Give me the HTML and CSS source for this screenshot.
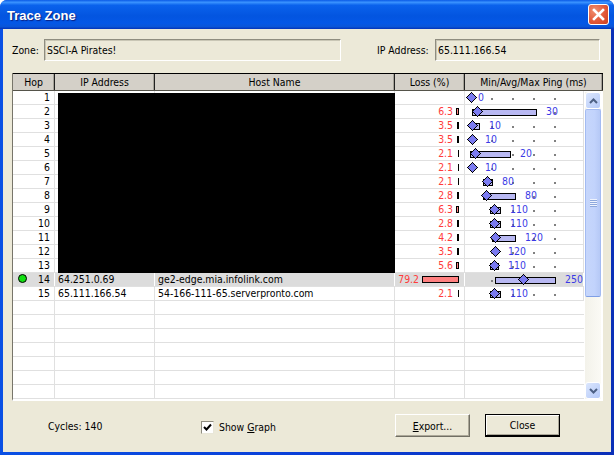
FILE: index.html
```html
<!DOCTYPE html>
<html lang="en">
<head>
  <meta charset="UTF-8" />
  <title>Trace Zone</title>
  <link rel="stylesheet" href="styles.css">
</head>
<body>
  <svg class="defs" width="0" height="0">
    <symbol id="diamond" viewBox="0 0 11 11">
      <polygon points="5.5,0 11,5.5 5.5,11 0,5.5" fill="#000" shape-rendering="crispEdges" />
      <polygon points="5.5,1.4 9.6,5.5 5.5,9.6 1.4,5.5" fill="#7b7bf0" shape-rendering="crispEdges" />
    </symbol>
  </svg>

  <div class="window">
    <div class="titlebar">
      <span class="title">Trace Zone</span>
      <button class="close-btn">
        <svg width="13" height="13" viewBox="0 0 13 13">
          <path d="M2 2 L11 11 M11 2 L2 11" stroke="#fff" stroke-width="2.6" stroke-linecap="square" />
        </svg>
      </button>
    </div>

    <div class="client">
      <div class="fields">
        <label class="zone-label">Zone:</label>
        <div class="field zone-field">SSCI-A Pirates!</div>
        <label class="ip-label">IP Address:</label>
        <div class="field ip-field">65.111.166.54</div>
      </div>

      <div class="list">
        <div class="list-head">
          <div>Hop</div>
          <div>IP Address</div>
          <div>Host Name</div>
          <div>Loss (%)</div>
          <div>Min/Avg/Max Ping (ms)</div>
        </div>
        <div class="list-body">
          <div class="rows">
            <div class="redacted"></div>

            <div class="row">
              <div class="hop">1</div><div></div><div></div><div class="loss"></div>
              <div class="graph">
                <svg class="dm" style="left:1px"><use href="#diamond" /></svg>
                <span class="ms" style="left:13px">0</span>
              </div>
            </div>
            <div class="row">
              <div class="hop">2</div><div></div><div></div>
              <div class="loss"><span>6.3</span><span class="meter"><i class="pink" style="width:3px"></i></span></div>
              <div class="graph">
                <b class="span" style="left:7px;width:65px"></b>
                <svg class="dm" style="left:7px"><use href="#diamond" /></svg>
                <span class="ms" style="left:81px">30</span>
              </div>
            </div>
            <div class="row">
              <div class="hop">3</div><div></div><div></div>
              <div class="loss"><span>3.5</span><span class="meter"><i style="width:2px"></i></span></div>
              <div class="graph">
                <b class="span" style="left:8px;width:7px"></b>
                <svg class="dm" style="left:2px"><use href="#diamond" /></svg>
                <span class="ms" style="left:24px">10</span>
              </div>
            </div>
            <div class="row">
              <div class="hop">4</div><div></div><div></div>
              <div class="loss"><span>3.5</span><span class="meter"><i style="width:2px"></i></span></div>
              <div class="graph">
                <svg class="dm" style="left:2px"><use href="#diamond" /></svg>
                <span class="ms" style="left:20px">10</span>
              </div>
            </div>
            <div class="row">
              <div class="hop">5</div><div></div><div></div>
              <div class="loss"><span>2.1</span><span class="meter"><i style="width:1px"></i></span></div>
              <div class="graph">
                <b class="span" style="left:5px;width:41px"></b>
                <svg class="dm" style="left:5px"><use href="#diamond" /></svg>
                <span class="ms" style="left:55px">20</span>
              </div>
            </div>
            <div class="row">
              <div class="hop">6</div><div></div><div></div>
              <div class="loss"><span>2.1</span><span class="meter"><i style="width:1px"></i></span></div>
              <div class="graph">
                <svg class="dm" style="left:2px"><use href="#diamond" /></svg>
                <span class="ms" style="left:20px">10</span>
              </div>
            </div>
            <div class="row">
              <div class="hop">7</div><div></div><div></div>
              <div class="loss"><span>2.1</span><span class="meter"><i style="width:1px"></i></span></div>
              <div class="graph">
                <b class="span" style="left:18px;width:10px"></b>
                <svg class="dm" style="left:17px"><use href="#diamond" /></svg>
                <span class="ms" style="left:37px">80</span>
              </div>
            </div>
            <div class="row">
              <div class="hop">8</div><div></div><div></div>
              <div class="loss"><span>2.8</span><span class="meter"><i style="width:2px"></i></span></div>
              <div class="graph">
                <b class="span" style="left:18px;width:33px"></b>
                <svg class="dm" style="left:16px"><use href="#diamond" /></svg>
                <span class="ms" style="left:60px">80</span>
              </div>
            </div>
            <div class="row">
              <div class="hop">9</div><div></div><div></div>
              <div class="loss"><span>6.3</span><span class="meter"><i class="pink" style="width:3px"></i></span></div>
              <div class="graph">
                <b class="span" style="left:25px;width:11px"></b>
                <svg class="dm" style="left:24px"><use href="#diamond" /></svg>
                <span class="ms" style="left:45px">110</span>
              </div>
            </div>
            <div class="row">
              <div class="hop">10</div><div></div><div></div>
              <div class="loss"><span>2.8</span><span class="meter"><i style="width:2px"></i></span></div>
              <div class="graph">
                <b class="span" style="left:25px;width:11px"></b>
                <svg class="dm" style="left:24px"><use href="#diamond" /></svg>
                <span class="ms" style="left:45px">110</span>
              </div>
            </div>
            <div class="row">
              <div class="hop">11</div><div></div><div></div>
              <div class="loss"><span>4.2</span><span class="meter"><i style="width:2px"></i></span></div>
              <div class="graph">
                <b class="span" style="left:27px;width:24px"></b>
                <svg class="dm" style="left:25px"><use href="#diamond" /></svg>
                <span class="ms" style="left:60px">120</span>
              </div>
            </div>
            <div class="row">
              <div class="hop">12</div><div></div><div></div>
              <div class="loss"><span>3.5</span><span class="meter"><i style="width:2px"></i></span></div>
              <div class="graph">
                <svg class="dm" style="left:25px"><use href="#diamond" /></svg>
                <span class="ms" style="left:43px">120</span>
              </div>
            </div>
            <div class="row">
              <div class="hop">13</div><div></div><div></div>
              <div class="loss"><span>5.6</span><span class="meter"><i class="pink" style="width:3px"></i></span></div>
              <div class="graph">
                <b class="span" style="left:25px;width:9px"></b>
                <svg class="dm" style="left:24px"><use href="#diamond" /></svg>
                <span class="ms" style="left:43px">110</span>
              </div>
            </div>
            <div class="row current">
              <div class="hop"><em class="led"></em>14</div>
              <div class="ip">64.251.0.69</div>
              <div class="host">ge2-edge.mia.infolink.com</div>
              <div class="loss"><span>79.2</span><span class="meter"><i class="pink" style="width:37px"></i></span></div>
              <div class="graph">
                <b class="span" style="left:30px;width:61px"></b>
                <svg class="dm" style="left:53px"><use href="#diamond" /></svg>
                <span class="ms" style="left:100px">250</span>
              </div>
            </div>
            <div class="row">
              <div class="hop">15</div>
              <div class="ip">65.111.166.54</div>
              <div class="host">54-166-111-65.serverpronto.com</div>
              <div class="loss"><span>2.1</span><span class="meter"><i style="width:1px"></i></span></div>
              <div class="graph">
                <b class="span" style="left:25px;width:11px"></b>
                <svg class="dm" style="left:24px"><use href="#diamond" /></svg>
                <span class="ms" style="left:45px">110</span>
              </div>
            </div>

            <div class="row blank"><div></div><div></div><div></div><div></div></div>
            <div class="row blank"><div></div><div></div><div></div><div></div></div>
            <div class="row blank"><div></div><div></div><div></div><div></div></div>
            <div class="row blank"><div></div><div></div><div></div><div></div></div>
            <div class="row blank"><div></div><div></div><div></div><div></div></div>
            <div class="row blank"><div></div><div></div><div></div><div></div></div>
            <div class="row blank"><div></div><div></div><div></div><div></div></div>
          </div>

          <div class="scrollbar">
            <div class="sb-btn">
              <svg width="9" height="6" viewBox="0 0 9 6"><path d="M1 5 L4.5 1.5 L8 5" fill="none" stroke="#4d6185" stroke-width="2" /></svg>
            </div>
            <div class="sb-thumb">
              <div class="grip"></div>
            </div>
            <div class="sb-track"></div>
            <div class="sb-btn">
              <svg width="9" height="6" viewBox="0 0 9 6"><path d="M1 1 L4.5 4.5 L8 1" fill="none" stroke="#4d6185" stroke-width="2" /></svg>
            </div>
          </div>
        </div>
      </div>

      <div class="footer">
        <span class="cycles">Cycles: 140</span>
        <label class="check">
          <span class="check-box">
            <svg width="11" height="11" viewBox="0 0 11 11"><path d="M2 5 L4.5 7.5 L9 2.5" fill="none" stroke="#000" stroke-width="2" /></svg>
          </span>
          <span>Show <u>G</u>raph</span>
        </label>
        <button class="btn export-btn"><u>E</u>xport...</button>
        <button class="btn close">Close</button>
      </div>
    </div>
  </div>
</body>
</html>
```

FILE: styles.css
```css
* {
  box-sizing: border-box;
}

html, body {
  margin: 0;
  padding: 0;
  overflow: hidden;
}

body {
  width: 614px;
  height: 455px;
  font-family: "DejaVu Sans Condensed", "Liberation Sans", sans-serif;
  font-size: 10.4px;
  color: #000;
  background: #fff;
}

.defs {
  position: absolute;
}

.window {
  width: 614px;
  height: 455px;
  display: flex;
  flex-direction: column;
  background: linear-gradient(90deg, #0a50e4 0, #0a3fd8 50%, #0a2fb8 100%);
  border-radius: 7px 7px 0 0;
  overflow: hidden;
}

.titlebar {
  height: 29px;
  flex: none;
  display: flex;
  align-items: center;
  justify-content: space-between;
  padding: 1px 5px 0 7px;
  background: linear-gradient(180deg, #0a5ae6 0%, #3a93ff 8%, #0a62ec 18%, #0355e0 55%, #0457e6 80%, #0a55d8 92%, #0332b8 100%);
}

.title {
  color: #fff;
  font-family: "Liberation Sans", sans-serif;
  font-weight: bold;
  font-size: 13px;
  text-shadow: 1px 1px 1px #0a1f80;
}

.close-btn {
  width: 21px;
  height: 21px;
  padding: 0;
  margin-top: -1px;
  border: 1px solid #fff;
  border-radius: 3px;
  background: radial-gradient(circle at 30% 30%, #f09070, #e2593a 55%, #cc3f1e);
  display: flex;
  align-items: center;
  justify-content: center;
}

.client {
  flex: 1;
  margin: 0 3px 3px;
  padding: 10px 8px 0 9px;
  background: #ece9d8;
  display: flex;
  flex-direction: column;
}

.fields {
  display: flex;
  align-items: center;
  height: 22px;
  flex: none;
}

.zone-label {
  width: 32px;
}

.ip-label {
  width: 58px;
  margin-left: 36px;
}

.field {
  height: 22px;
  line-height: 20px;
  padding-left: 2px;
  border: 1px solid;
  border-color: #8f8d80 #fff #fff #8f8d80;
  box-shadow: inset 1px 1px 0 #c9c6b5;
}

.zone-field {
  width: 297px;
}

.ip-field {
  width: 165px;
}

.list {
  margin-top: 12px;
  height: 328px;
  flex: none;
  background: #fff;
  border-left: 1px solid #77756a;
  border-bottom: 2px solid #fff;
  display: flex;
  flex-direction: column;
  overflow: hidden;
}

.list-head {
  height: 18px;
  flex: none;
  display: grid;
  grid-template-columns: 42px 100px 240px 70px 138px;
  background: #d4d0c8;
  border-top: 1px solid #000;
  border-bottom: 1px solid #55534a;
}

.list-head div {
  text-align: center;
  line-height: 16px;
  border-right: 1px solid #222;
  box-shadow: inset -1px 0 0 #a5a298;
}

.list-body {
  display: flex;
  flex: 1;
  min-height: 0;
}

.rows {
  width: 571px;
  position: relative;
  flex: none;
}

/* black box hiding the first hops */
.redacted {
  position: absolute;
  left: 45px;
  top: 2px;
  width: 337px;
  height: 180px;
  background: #000;
  z-index: 2;
}

.row {
  height: 14px;
  display: grid;
  grid-template-columns: 42px 100px 240px 70px 119px;
  border-bottom: 1px solid #e0e0e0;
  line-height: 13px;
  white-space: nowrap;
}

.row > div {
  border-right: 1px solid #e0e0e0;
  height: 13px;
}

.row.current {
  background: #dcdcdc;
}

.row.current > div {
  border-right-color: #fff;
}

.hop {
  text-align: right;
  padding-right: 4px;
  position: relative;
}

.ip, .host {
  padding-left: 3px;
}

.led {
  position: absolute;
  left: 5px;
  top: 1px;
  width: 9px;
  height: 9px;
  border: 1px solid #000;
  border-radius: 50%;
  background: #12e012;
}

.loss {
  display: flex;
  justify-content: flex-end;
  align-items: center;
  padding-right: 5px;
  color: #ff3b3b;
}

.meter {
  min-width: 3px;
  margin-left: 3px;
  display: flex;
  justify-content: flex-end;
}

.meter i {
  display: block;
  height: 7px;
  background: #000;
  box-shadow: inset 0 0 0 1px #000;
}

.meter i.pink {
  background: #ff8080;
}

/* the four grey ticks behind every ping graph */
.graph {
  position: relative;
  background-image:
    linear-gradient(#808080, #808080),
    linear-gradient(#808080, #808080),
    linear-gradient(#808080, #808080),
    linear-gradient(#808080, #808080);
  background-size: 2px 2px;
  background-repeat: no-repeat;
  background-position: 26px 7px, 47px 7px, 68px 7px, 89px 7px;
}

.span {
  position: absolute;
  top: 4px;
  height: 7px;
  background: #b8b8f2;
  border: 1px solid #000;
}

.dm {
  position: absolute;
  top: 1px;
  width: 11px;
  height: 11px;
}

.ms {
  position: absolute;
  top: 0;
  color: #3a3ae6;
}

.scrollbar {
  width: 19px;
  flex: none;
  margin-top: 1px;
  padding: 0 2px 0 1px;
  display: flex;
  flex-direction: column;
  background: linear-gradient(90deg, #fff 0, #fff 1px, #f3f2ea 1px, #fbfaf5 17px, #fff 17px);
  height: 307px;
}

.sb-btn {
  height: 17px;
  flex: none;
  display: flex;
  align-items: center;
  justify-content: center;
  border: 1px solid #fff;
  border-radius: 3px;
  background: linear-gradient(135deg, #dbe6fd, #b4c9f8);
}

.sb-thumb {
  height: 188px;
  flex: none;
  display: flex;
  align-items: center;
  justify-content: center;
  border: 1px solid #a3bbf2;
  border-bottom-color: #7f9fe6;
  border-radius: 2px;
  background: linear-gradient(90deg, #c6d6fb, #c2d3fc 60%, #b6c9f6);
}

.grip {
  width: 7px;
  height: 8px;
  background: repeating-linear-gradient(180deg, #eef3fe 0, #eef3fe 1px, #8ea8dc 1px, #8ea8dc 2px);
}

.sb-track {
  flex: 1;
}

.footer {
  flex: 1;
  display: flex;
  align-items: center;
  padding: 0 0 2px 36px;
}

.cycles {
  width: 153px;
}

.check {
  display: flex;
  align-items: center;
  gap: 5px;
  width: 194px;
  margin-top: 3px;
}

.check-box {
  width: 13px;
  height: 13px;
  background: #fff;
  border: 1px solid;
  border-color: #8f8d80 #e8e6d8 #e8e6d8 #8f8d80;
  display: flex;
  align-items: center;
  justify-content: center;
}

.btn {
  height: 23px;
  font: inherit;
  color: #000;
  background: #ece9d8;
  padding: 0;
  border: 1px solid;
  border-color: #fff #716f64 #716f64 #fff;
  box-shadow: inset -1px -1px 0 #aca899;
}

.export-btn {
  width: 75px;
}

.btn.close {
  width: 75px;
  margin-left: 15px;
  border-color: #000;
  border-bottom-width: 2px;
  box-shadow: inset 1px 1px 0 #fff, inset -1px -1px 0 #aca899;
}
```
